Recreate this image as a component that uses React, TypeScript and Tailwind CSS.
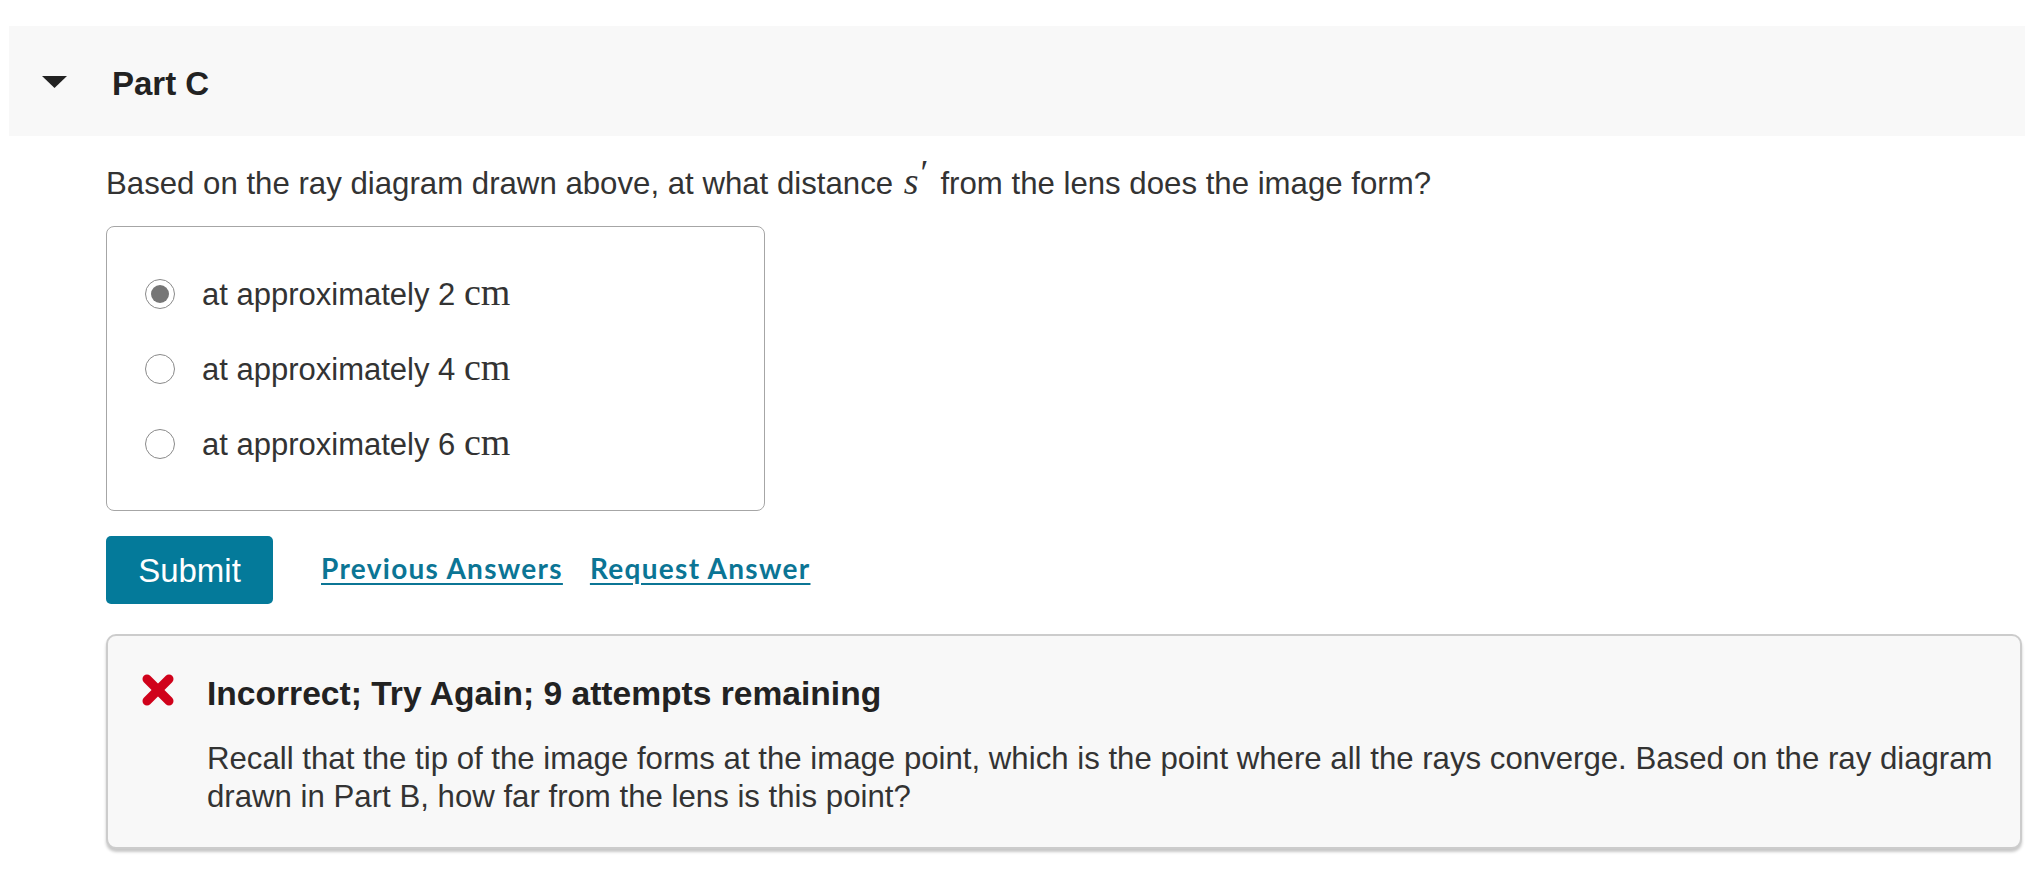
import React from "react";

const sans = "font-['Liberation_Sans',Arial,sans-serif]";

function Radio({ checked }: { checked?: boolean }) {
  return (
    <div className="w-[30px] h-[30px] rounded-full border border-[#8a8a8a] bg-white flex items-center justify-center shrink-0">
      {checked && <div className="w-[18px] h-[18px] rounded-full bg-[#767676]" />}
    </div>
  );
}

function Option({ n, checked }: { n: string; checked?: boolean }) {
  return (
    <div className="h-[75px] flex items-center">
      <Radio checked={checked} />
      <span className="ml-[27px] text-[31px] leading-[37px] text-[#333]">
        at approximately {n}{" "}
        <span className="font-['Liberation_Serif',serif] text-[38px]">cm</span>
      </span>
    </div>
  );
}

export default function App() {
  return (
    <div className={`w-[2025px] h-[872px] bg-white ${sans} text-[#333] overflow-hidden`}>
      <div className="pt-[26px] pl-[9px]">
        <div className="h-[110px] bg-[#f8f8f8] flex items-center">
          <svg className="ml-[33px] shrink-0 mt-[2px]" width="25" height="12" viewBox="0 0 25 12">
            <polygon points="0,0 25,0 12.5,12" fill="#222" />
          </svg>
          <span className="ml-[45px] mt-[5px] text-[33px] font-bold text-[#222] leading-[40px]">Part C</span>
        </div>
      </div>

      <div className="pl-[106px]">
        <p className="mt-[27px] text-[31.2px] leading-[37px] text-[#333]">
          Based on the ray diagram drawn above, at what distance{" "}
          <span className="font-['Liberation_Serif',serif] text-[38px] ml-[2px]">
            <i>s</i>
            <span className="relative -top-[9px] ml-[2px] text-[36px]">′</span>
          </span>
          <span className="ml-[12px]">from the lens does the image form?</span>
        </p>

        <div className="mt-[24px] w-[659px] h-[285px] border-[1.5px] border-[#a6a6a6] rounded-[8px] pt-[29px] pl-[38px]">
          <Option n="2" checked />
          <Option n="4" />
          <Option n="6" />
        </div>

        <div className="mt-[25px] flex items-center">
          <button className="w-[167px] h-[68px] rounded-[5px] bg-[#047a9a] text-white text-[33px] leading-none">
            Submit
          </button>
          <a className="ml-[48px] mb-[5px] font-['Lato',sans-serif] font-bold text-[28px] tracking-[1.3px] text-[#0b7595] underline decoration-2 underline-offset-[4px]">
            Previous Answers
          </a>
          <a className="ml-[27px] mb-[5px] font-['Lato',sans-serif] font-bold text-[28px] tracking-[1.3px] text-[#0b7595] underline decoration-2 underline-offset-[4px]">
            Request Answer
          </a>
        </div>

        <div className="mt-[30px] w-[1916px] h-[215px] bg-[#f8f8f8] border-2 border-[#cccccc] rounded-[10px] shadow-[0_3px_3px_rgba(0,0,0,0.22)] flex pl-[34px] pt-[38px] pr-[20px]">
          <svg className="shrink-0" width="32" height="32" viewBox="0 0 32 32">
            <line x1="5" y1="5" x2="27" y2="27" stroke="#d0021b" strokeWidth="9" strokeLinecap="round" />
            <line x1="27" y1="5" x2="5" y2="27" stroke="#d0021b" strokeWidth="9" strokeLinecap="round" />
          </svg>
          <div className="ml-[33px]">
            <div className="text-[33.6px] font-bold leading-[40px] text-[#222]">
              Incorrect; Try Again; 9 attempts remaining
            </div>
            <p className="mt-[26px] text-[31.2px] leading-[38px] text-[#333]">
              Recall that the tip of the image forms at the image point, which is the point where all the rays
              converge. Based on the ray diagram drawn in Part B, how far from the lens is this point?
            </p>
          </div>
        </div>
      </div>
    </div>
  );
}
